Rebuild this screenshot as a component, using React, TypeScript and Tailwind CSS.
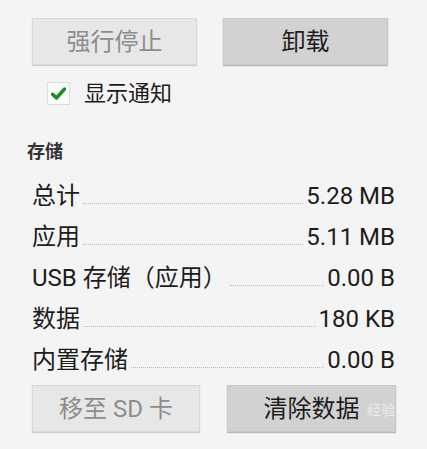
import React from "react";

const font = { fontFamily: "Roboto, 'Noto Sans CJK SC', sans-serif" };

function Row({ label, value }: { label: string; value: string }) {
  return (
    <div className="flex items-baseline h-[41px] leading-[41px] text-[24px] text-[#1c1c1c]">
      <span className="whitespace-nowrap">{label}</span>
      <div className="flex-1 mx-[3px] h-0 border-b border-dotted border-[#b8b8b8]" />
      <span className="whitespace-nowrap">{value}</span>
    </div>
  );
}

export default function App() {
  return (
    <div className="w-[427px] h-[449px] bg-[#f4f4f4] relative overflow-hidden" style={font}>
      <div className="pt-[18px] pl-[32px] flex gap-[26px]">
        <div className="w-[165px] h-[47px] bg-[#e7e7e7] border border-[#d8d8d8] shadow-[0_1px_1px_rgba(0,0,0,0.15)] flex items-center justify-center text-[24px] text-[#8c8c8c]">
          强行停止
        </div>
        <div className="w-[165px] h-[47px] bg-[#d2d2d2] border border-[#c8c8c8] shadow-[0_1px_1px_rgba(0,0,0,0.25)] flex items-center justify-center text-[24px] text-[#1c1c1c]">
          卸载
        </div>
      </div>
      <div className="mt-[16px] pl-[47px] flex items-center h-[24px]">
        <div className="w-[23px] h-[23px] bg-[#fbfbfb] border border-[#dcdcdc] flex items-center justify-center">
          <svg width="15" height="13" viewBox="0 0 15 13">
            <path d="M1.5 7.2 L5.5 11 L13.5 2" fill="none" stroke="#1f8a27" strokeWidth="3.4" strokeLinecap="round" strokeLinejoin="round" />
          </svg>
        </div>
        <span className="ml-[14px] text-[22px] text-[#1c1c1c]">显示通知</span>
      </div>
      <div className="mt-[35px] pl-[27px] h-[24px] leading-[24px] text-[18px] font-bold text-[#333]">存储</div>
      <div className="mt-[12px] pl-[32px] pr-[32px]">
        <Row label="总计" value="5.28 MB" />
        <Row label="应用" value="5.11 MB" />
        <Row label="USB 存储（应用）" value="0.00 B" />
        <Row label="数据" value="180 KB" />
        <Row label="内置存储" value="0.00 B" />
      </div>
      <div className="mt-[4px] pl-[32px] flex gap-[27px]">
        <div className="w-[168px] h-[47px] bg-[#e7e7e7] border border-[#d8d8d8] shadow-[0_1px_1px_rgba(0,0,0,0.15)] flex items-center justify-center text-[24px] text-[#8c8c8c]">
          移至 SD 卡
        </div>
        <div className="w-[169px] h-[47px] bg-[#d2d2d2] border border-[#c8c8c8] shadow-[0_1px_1px_rgba(0,0,0,0.25)] flex items-center justify-center text-[24px] text-[#1c1c1c]">
          清除数据
        </div>
      </div>
      <div className="absolute left-[367px] top-[401px] text-[14px] leading-[18px] text-[#ececec]">经验</div>
    </div>
  );
}
